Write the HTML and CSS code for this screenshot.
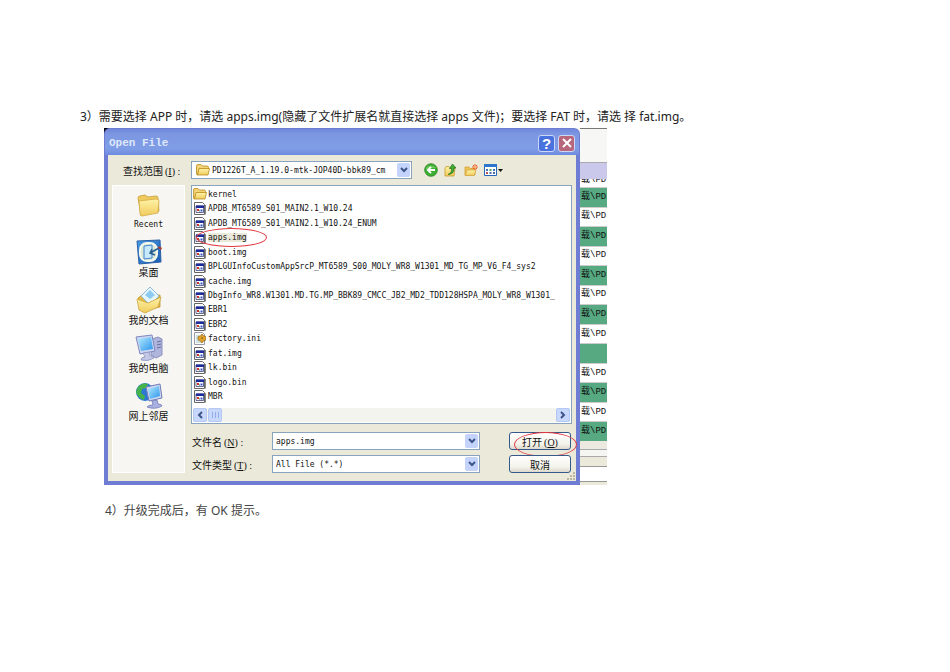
FILE: index.html
```
<!DOCTYPE html>
<html lang="zh-CN">
<head>
    <meta charset="UTF-8">
    <meta name="viewport" content="width=device-width, initial-scale=1.0">
    <title>升级步骤</title>
    <link rel="stylesheet" href="styles.css">
</head>
<body>
    <!-- shared icons -->
    <svg class="sprite" width="0" height="0" aria-hidden="true">
        <defs>
            <linearGradient id="gold" x1="0" y1="0" x2="0" y2="1"><stop offset="0" stop-color="#fff3a8"/><stop offset="1" stop-color="#f0cb5c"/></linearGradient>
            <linearGradient id="screen" x1="0" y1="0" x2="1" y2="1"><stop offset="0" stop-color="#b5ecff"/><stop offset="1" stop-color="#2b94ec"/></linearGradient>
            <linearGradient id="blue" x1="0" y1="0" x2="1" y2="1"><stop offset="0" stop-color="#4a9be4"/><stop offset="1" stop-color="#1a5bb0"/></linearGradient>
        </defs>
        <symbol id="folder" viewBox="0 0 14 12">
            <path d="M.5 2Q.5.5 2 .5h3L6.500 2H11q1.500 0 1.500 1.500v2H3L1.500 11Q.5 11 .5 9.500z" fill="#f3d377" stroke="#b98a1c" stroke-width=".8"/>
            <path d="M3 4.500h10.500l-1.500 6.500H1.500z" fill="url(#gold)" stroke="#b98a1c" stroke-width=".8"/>
        </symbol>
        <symbol id="file" viewBox="0 0 12 13">
            <path d="M.5.5h8l2 2v10H.5z" fill="#fff" stroke="#666"/>
            <path d="M11.500 3v9.500" stroke="#888"/>
            <path d="M2 4h7.500v6.500H2z" fill="#fff" stroke="#404878" stroke-width=".8"/>
            <path d="M2 3.500h8V6H2z" fill="#1c2b9c"/>
            <path d="M3 7h2v2H3z" fill="#d03030"/>
            <path d="M5 8h1v2H5z" fill="#8fc0a0"/>
            <path d="M6.500 7.500h2v2h-2z" fill="#3152c8"/>
        </symbol>
        <symbol id="ini" viewBox="0 0 12 13">
            <path d="M.5.5h8l2 2v10H.5z" fill="#fbfcf5" stroke="#99a"/>
            <path d="M2 4h3M2 6h3M2 8h3M2 10h5" stroke="#7fb7c8" stroke-width=".8"/>
            <path d="M8 2l1.500 2 2 .2.500 2-.5 2-2 .7L8 11 6.500 9l-2-.8-.7-2 .7-2L6.500 4z" fill="#e2a32c" stroke="#94600f" stroke-width=".7"/>
            <circle cx="8" cy="6.300" r="1" fill="#9b6c1b"/>
        </symbol>
        <symbol id="down" viewBox="0 0 8 6">
            <path d="M1 1l3 3 3-3" fill="none" stroke="#3d5488" stroke-width="2"/>
        </symbol>
    </svg>

    <main class="doc">
        <p class="step">3）需要选择 APP 时，请选 apps.img(隐藏了文件扩展名就直接选择 apps 文件)；要选择 FAT 时，请选 择 fat.img。</p>

        <section class="shot">
            <form class="dialog" onsubmit="return false">
                <header class="titlebar">
                    <h1>Open File</h1>
                    <button type="button" class="tb-btn help" aria-label="Help">?</button>
                    <button type="button" class="tb-btn close" aria-label="Close"><svg width="12" height="12" viewBox="0 0 12 12"><path d="M2 2l8 8M10 2l-8 8" stroke="#fff" stroke-width="2"/></svg></button>
                </header>

                <div class="lookin">
                    <label for="dir">查找范围<span class="key">(<u>I</u>) :</span></label>
                    <div class="combo">
                        <svg class="combo-icon" width="14" height="12"><use href="#folder"/></svg>
                        <select id="dir"><option>PD1226T_A_1.19.0-mtk-JOP40D-bbk89_cm</option></select>
                        <span class="arrow"><svg width="8" height="6"><use href="#down"/></svg></span>
                    </div>
                    <div class="tools">
                        <button type="button" aria-label="Back"><svg width="14" height="14" viewBox="0 0 14 14"><circle cx="7" cy="7" r="6.300" fill="#3fae35" stroke="#25831f" stroke-width=".8"/><path d="M2 5a6 5 0 0 1 10 0q-5 0-10 1z" fill="#8ade70" opacity=".6"/><path d="M11 7H4.500M7 3.800L3.800 7 7 10.200" fill="none" stroke="#fff" stroke-width="1.800"/></svg></button>
                        <button type="button" aria-label="Up"><svg width="14" height="14" viewBox="0 0 14 14"><path d="M1 5l1-1.500h3L6 5h5l-1 8H1z" fill="url(#gold)" stroke="#c79a30" stroke-width=".8"/><path d="M4 11.500Q8 10 7.500 5.500h-2L8.500 1 12 5h-2q.5 6-6 6.500z" fill="#42ad32" stroke="#22701c" stroke-width=".7"/></svg></button>
                        <button type="button" aria-label="New folder"><svg width="14" height="14" viewBox="0 0 14 14"><path d="M1 4h4l1 1.500h5V12H1z" fill="#f0c558" stroke="#d0a03a" stroke-width=".8"/><path d="M3 7h9l-2 5.500H1z" fill="url(#gold)" stroke="#d0a03a" stroke-width=".7"/><path d="M11 1v6M8 4h6M9 2l4 4M13 2L9 6" stroke="#ee5a2b"/><circle cx="11" cy="4" r="1" fill="#ffd28a"/></svg></button>
                        <button type="button" aria-label="Views"><svg width="19" height="14" viewBox="0 0 19 14"><path d="M.5 1.500h12v11H.5z" fill="#fff" stroke="#2a66b8"/><path d="M0 1h13v3H0z" fill="#2e75cc"/><path d="M2 6h2v2H2zM9 6h2v2H9z" fill="#4472b8"/><path d="M5.500 6h2v2h-2z" fill="#50a06c"/><path d="M2 9h2v2H2z" fill="#bd5252"/><path d="M5.500 9h2v2h-2zM9 9h2v2H9z" fill="#4c6cae"/><path d="M14 6h5l-2.500 3z" fill="#111"/></svg></button>
                    </div>
                </div>

                <div class="content">
                    <nav class="places">
                        <a href="#recent">
                            <svg width="28" height="28" viewBox="0 0 28 28"><path d="M3 8q0-2 2-2l5-1 3 2 8-1q2 0 2 2l1 13L6 25z" fill="#efcb5e" stroke="#c79c34" stroke-width=".8"/><path d="M4 11l17-2q3 0 3 2l-1 12-16 3q-2 0-2-2z" fill="url(#gold)" stroke="#cda33c" stroke-width=".7"/></svg>
                            <span class="latin">Recent</span>
                        </a>
                        <a href="#desktop">
                            <svg width="28" height="28" viewBox="0 0 28 28"><path d="M2 3l23-1 1 22-22 2z" fill="url(#blue)" stroke="#2b60a8"/><rect x="5" y="5" width="17" height="18" rx="7" fill="#d9e9d8" stroke="#f4f8ea" stroke-width="2"/><path d="M9 8l8-1v13l-8 1z" fill="#c8e8fc" stroke="#4586cc"/><path d="M24 10l-9 5M17 11l-2 4 5 2" fill="none" stroke="#2a5f90" stroke-width="1.500"/><path d="M24 8l3 2-1 2-3-2z" fill="#ae3c32"/></svg>
                            <span>桌面</span>
                        </a>
                        <a href="#documents">
                            <svg width="28" height="28" viewBox="0 0 28 28"><path d="M3 12l4-3h18v12L7 25z" fill="#e5ba48" stroke="#c39833" stroke-width=".8"/><path d="M15 1l9 9-9 9-9-9z" fill="#e5f6ff" stroke="#8fbbd6"/><path d="M15 4l5 5-5 4-5-4z" fill="#8ccbef"/><path d="M2 13l11 4 13-6-3 10-13 6-6-3z" fill="url(#gold)" stroke="#cda33c" stroke-width=".8"/></svg>
                            <span>我的文档</span>
                        </a>
                        <a href="#computer">
                            <svg width="28" height="28" viewBox="0 0 28 28"><path d="M17 5l6-2 4 2v16l-6 3-5-3z" fill="#b0b5dc" stroke="#7b80b4" stroke-width=".8"/><path d="M22 8l4-1M22 11l4-1M22 14l4-1" stroke="#646aa5"/><path d="M1 3l16-2 3 16-15 3z" fill="#cfd6f0" stroke="#7c88bf"/><path d="M3 5l13-2 2 12-12 2z" fill="url(#screen)"/><path d="M8 19l6-1 1 4q4 0 4 2-6 4-13 2 0-3 4-3z" fill="#c3c8e6" stroke="#8c91be" stroke-width=".8"/></svg>
                            <span>我的电脑</span>
                        </a>
                        <a href="#network">
                            <svg width="28" height="28" viewBox="0 0 28 28"><circle cx="10" cy="10" r="9" fill="#2d78d2"/><path d="M3 5Q7 0 13 2l-2 4-4 1-1 4 4 3-1 4Q3 16 1 10z" fill="#43b34a"/><path d="M11 5l14-3 2 14-13 3z" fill="#cfd6f0" stroke="#707db8"/><path d="M13 7l11-3 1 10-10 3z" fill="url(#screen)"/><path d="M17 19l5-1 1 4q4 0 4 2-7 4-15 1 1-2 6-2z" fill="#a9b1e0" stroke="#737cb8" stroke-width=".8"/></svg>
                            <span>网上邻居</span>
                        </a>
                    </nav>

                    <div class="main">
                        <div class="files">
                            <ul>
                                <li class="dir"><svg width="14" height="12"><use href="#folder"/></svg><span>kernel</span></li>
                                <li><svg width="12" height="13"><use href="#file"/></svg><span>APDB_MT6589_S01_MAIN2.1_W10.24</span></li>
                                <li><svg width="12" height="13"><use href="#file"/></svg><span>APDB_MT6589_S01_MAIN2.1_W10.24_ENUM</span></li>
                                <li class="selected"><svg width="12" height="13"><use href="#file"/></svg><span>apps.img</span><i class="mark"></i></li>
                                <li><svg width="12" height="13"><use href="#file"/></svg><span>boot.img</span></li>
                                <li><svg width="12" height="13"><use href="#file"/></svg><span>BPLGUInfoCustomAppSrcP_MT6589_S00_MOLY_WR8_W1301_MD_TG_MP_V6_F4_sys2</span></li>
                                <li><svg width="12" height="13"><use href="#file"/></svg><span>cache.img</span></li>
                                <li><svg width="12" height="13"><use href="#file"/></svg><span>DbgInfo_WR8.W1301.MD.TG.MP_BBK89_CMCC_JB2_MD2_TDD128HSPA_MOLY_WR8_W1301_</span></li>
                                <li><svg width="12" height="13"><use href="#file"/></svg><span>EBR1</span></li>
                                <li><svg width="12" height="13"><use href="#file"/></svg><span>EBR2</span></li>
                                <li><svg width="12" height="13"><use href="#ini"/></svg><span>factory.ini</span></li>
                                <li><svg width="12" height="13"><use href="#file"/></svg><span>fat.img</span></li>
                                <li><svg width="12" height="13"><use href="#file"/></svg><span>lk.bin</span></li>
                                <li><svg width="12" height="13"><use href="#file"/></svg><span>logo.bin</span></li>
                                <li><svg width="12" height="13"><use href="#file"/></svg><span>MBR</span></li>
                            </ul>
                            <div class="scrollbar">
                                <button type="button" aria-label="Scroll left"><svg width="6" height="8" viewBox="0 0 6 8"><path d="M5 1L2 4l3 3" fill="none" stroke="#3d5488" stroke-width="2"/></svg></button>
                                <span class="thumb"><svg width="7" height="6" viewBox="0 0 7 6"><path d="M.5 0v6M3.500 0v6M6.500 0v6" stroke="#93acec"/></svg></span>
                                <button type="button" class="right" aria-label="Scroll right"><svg width="6" height="8" viewBox="0 0 6 8"><path d="M1 1l3 3-3 3" fill="none" stroke="#3d5488" stroke-width="2"/></svg></button>
                            </div>
                        </div>

                        <div class="fields">
                            <label for="name">文件名<span class="key">(<u>N</u>) :</span></label>
                            <div class="combo">
                                <input id="name" type="text" value="apps.img">
                                <span class="arrow"><svg width="8" height="6"><use href="#down"/></svg></span>
                            </div>
                            <button type="submit" class="btn">打开<span class="key">(<u>O</u>)</span><i class="mark"></i></button>

                            <label for="type">文件类型<span class="key">(<u>T</u>) :</span></label>
                            <div class="combo">
                                <select id="type"><option>All File (*.*)</option></select>
                                <span class="arrow"><svg width="8" height="6"><use href="#down"/></svg></span>
                            </div>
                            <button type="button" class="btn">取消</button>
                        </div>
                    </div>
                </div>
                <svg class="grip" width="10" height="10" viewBox="0 0 10 10"><path d="M7 1h2v2H7zM4 4h2v2H4zM7 4h2v2H7zM1 7h2v2H1zM4 7h2v2H4zM7 7h2v2H7z" fill="#b9b6a2"/></svg>
            </form>

            <!-- window behind the dialog -->
            <div class="behind">
                <div class="behind-top"></div>
                <div class="behind-head"></div>
                <div class="behind-cut"><span>载\PD</span></div>
                <ul class="behind-rows">
                    <li>载\PD</li>
                    <li>载\PD</li>
                    <li>载\PD</li>
                    <li>载\PD</li>
                    <li>载\PD</li>
                    <li>载\PD</li>
                    <li>载\PD</li>
                    <li>载\PD</li>
                    <li></li>
                    <li>载\PD</li>
                    <li>载\PD</li>
                    <li>载\PD</li>
                    <li>载\PD</li>
                </ul>
                <div class="behind-bar"></div>
                <div class="behind-box"></div>
            </div>
        </section>

        <p class="step last">4）升级完成后，有 OK 提示。</p>
    </main>
</body>
</html>
```

FILE: styles.css
```
* {
    box-sizing: border-box;
}
body {
    margin: 0;
    background: #fff;
    color: #222;
    font-family: "Noto Sans", "Noto Sans CJK SC", sans-serif;
    font-size: 12px;
}
ul {
    list-style: none;
    margin: 0;
    padding: 0;
}
button, input, select {
    margin: 0;
    padding: 0;
    color: inherit;
    font: inherit;
}
svg {
    flex: none;
}
.sprite {
    position: absolute;
}
.doc {
    padding: 108px 80px 40px;
}
.step {
    margin: 0;
    line-height: 18px;
}
.step.last {
    margin: 17px 0 0 25px;
    color: #444;
}
.shot {
    display: flex;
    max-width: 503px;
    margin: 2px 0 0 24px;
    background: linear-gradient(90deg, #0c0c1c 95px, #f7f7f5 95px);
}

/* dialog */
.dialog {
    position: relative;
    flex: 1;
    min-width: 0;
    border: 4px solid #6e7cd3;
    border-top-width: 1px;
    border-radius: 6px 6px 0 0;
    background: #ebe9d9;
    color: #111;
    font-family: "DejaVu Sans Mono", "Noto Sans CJK SC", monospace;
    font-size: 8px;
}
.titlebar {
    display: flex;
    align-items: center;
    gap: 3px;
    height: 26px;
    margin: 0 -3px;
    padding: 2px 4px 0 4px;
    border-radius: 5px 5px 0 0;
    background: linear-gradient(#6f88dc, #7d97e2 20%, #7f9de6 75%, #6f8ade);
}
.titlebar h1 {
    flex: 1;
    margin: 0;
    color: #dfe7fb;
    font-family: "Liberation Mono", monospace;
    font-size: 11px;
}
.tb-btn {
    display: flex;
    align-items: center;
    justify-content: center;
    width: 17px;
    height: 17px;
    border: 1px solid #cdd8f8;
    border-radius: 3px;
    color: #fff;
    font-family: "Liberation Sans", sans-serif;
    font-size: 15px;
    font-weight: bold;
}
.help {
    background: #4a72df;
}
.close {
    background: #b8667c;
}
label, .btn {
    font-size: 10px;
    white-space: nowrap;
}
.key {
    margin-left: 2px;
    font-family: "Liberation Serif", serif;
}
.lookin {
    display: flex;
    align-items: center;
    height: 30px;
    padding-left: 15px;
}
.lookin label {
    width: 68px;
}
.lookin .combo {
    width: 221px;
}
.combo {
    display: flex;
    align-items: center;
    min-width: 0;
    height: 18px;
    padding: 1px;
    border: 1px solid #87a3bd;
    background: #fff;
}
.combo-icon {
    margin: 0 2px 0 3px;
}
.combo input, .combo select {
    flex: 1;
    width: 100%;
    min-width: 0;
    border: 0;
    outline: 0;
    background: none;
    appearance: none;
}
.fields input, .fields select {
    padding-left: 2px;
}
.arrow {
    display: flex;
    flex: none;
    align-items: center;
    justify-content: center;
    width: 13px;
    height: 14px;
    border-radius: 2px;
    background: #c3d3fb;
}
.tools {
    display: flex;
    gap: 6px;
    margin-left: 12px;
}
.tools button {
    display: flex;
    border: 0;
    background: none;
}
.content {
    display: flex;
    gap: 6px;
    padding: 0 4px 8px;
}
.places {
    flex: none;
    width: 73px;
    padding-top: 4px;
    border: 1px solid #fff;
    background: #f7f6f2;
}
.places a {
    display: flex;
    flex-direction: column;
    align-items: center;
    height: 48px;
    color: #111;
    font-size: 10px;
    line-height: 14px;
    text-decoration: none;
}
.places .latin {
    font-size: 8px;
}
.main {
    flex: 1;
    min-width: 0;
}

/* file list */
.files {
    padding: 1px;
    border: 1px solid #87a3bd;
    background: #fff;
}
.files ul {
    display: grid;
    grid-template-rows: repeat(15, 1fr);
    height: 217px;
}
.files li {
    position: relative;
    display: flex;
    align-items: center;
    gap: 2px;
    min-width: 0;
    padding-left: 1px;
    white-space: nowrap;
}
.files .dir {
    gap: 1px;
    padding-left: 0;
}
.selected span {
    background: #ebe9d9;
}
.mark {
    position: absolute;
    border: 1px solid #e2383f;
    border-radius: 50%;
}
.files .mark {
    left: 3px;
    top: -2px;
    width: 71px;
    height: 19px;
}
.scrollbar {
    display: flex;
    gap: 1px;
    height: 14px;
    margin-top: 4px;
    background: #f4f4ef;
}
.scrollbar button, .thumb {
    display: flex;
    align-items: center;
    justify-content: center;
    width: 14px;
    border: 1px solid #b4c8f6;
    border-radius: 2px;
    background: #c8d7fc;
}
.scrollbar .right {
    margin-left: auto;
}

/* name and type */
.fields {
    display: grid;
    grid-template-columns: 80px 1fr 62px;
    row-gap: 5px;
    align-items: center;
    margin-top: 8px;
    padding: 0 1px;
}
.fields .combo {
    margin-right: 29px;
}
.btn {
    position: relative;
    height: 18px;
    border: 1px solid #35598a;
    border-radius: 3px;
    background: linear-gradient(#fff, #f3f2ea 70%, #dcd8cc);
}
.btn .mark {
    left: 4px;
    top: -1px;
    width: 63px;
    height: 25px;
}
.grip {
    position: absolute;
    right: 0;
    bottom: 0;
}

/* window behind */
.behind {
    display: flex;
    flex: none;
    flex-direction: column;
    width: 27px;
    background: #ebe9d9;
    color: #111;
    font-family: "Liberation Mono", "Noto Sans CJK SC", monospace;
    font-size: 9px;
}
.behind-top {
    height: 34px;
    border-top: 1px solid #777;
    background: #f7f7f5;
}
.behind-head {
    height: 17px;
    border-top: 1px solid #aaa;
    background: #cac8eb;
}
.behind-cut {
    display: flex;
    align-items: flex-end;
    height: 8px;
    padding-left: 1px;
    overflow: hidden;
    background: #fff;
    line-height: 13px;
}
.behind-rows {
    display: grid;
    grid-template-rows: repeat(13, 1fr);
    height: 254px;
    line-height: 17px;
}
.behind-rows li {
    display: flex;
    align-items: center;
    padding-left: 1px;
    border-top: 1px solid #ccc;
    background: #fff;
    white-space: nowrap;
}
.behind-rows li:nth-child(odd) {
    background: #56a981;
}
.behind-bar {
    height: 16px;
    border-bottom: 1px solid #aaa;
    background: linear-gradient(#ebe9e0 8px, #aaa 8px, #aaa 9px, #f5f5f2 9px);
}
.behind-box {
    flex: 1;
    margin: 9px 0 3px;
    border: solid #999;
    border-width: 1px 0;
    background: #fff;
}
```
